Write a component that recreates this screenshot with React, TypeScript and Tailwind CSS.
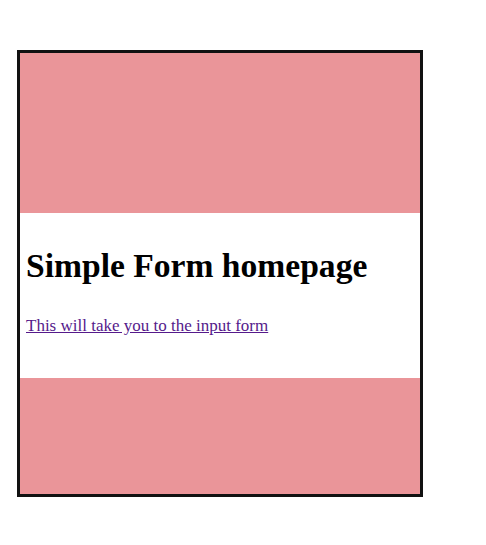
export default function App() {
  return (
    <div className="min-h-screen bg-white pt-[50px] pl-[17px]">
      <div className="w-[406px] border-[3px] border-[#111] flex flex-col">
        <div className="h-[160px] bg-[#ea9599]" />
        <div className="h-[165px] bg-white pl-[6px] pt-[34px]" style={{ fontFamily: '"Liberation Serif", "Times New Roman", serif' }}>
          <h1 className="text-[33.6px] leading-[37px] font-bold text-black">Simple Form homepage</h1>
          <p className="mt-[32px] text-[17px] leading-[19px]">
            <a href="#" className="text-[#551a8b] underline">This will take you to the input form</a>
          </p>
        </div>
        <div className="h-[116px] bg-[#ea9599]" />
      </div>
    </div>
  );
}
